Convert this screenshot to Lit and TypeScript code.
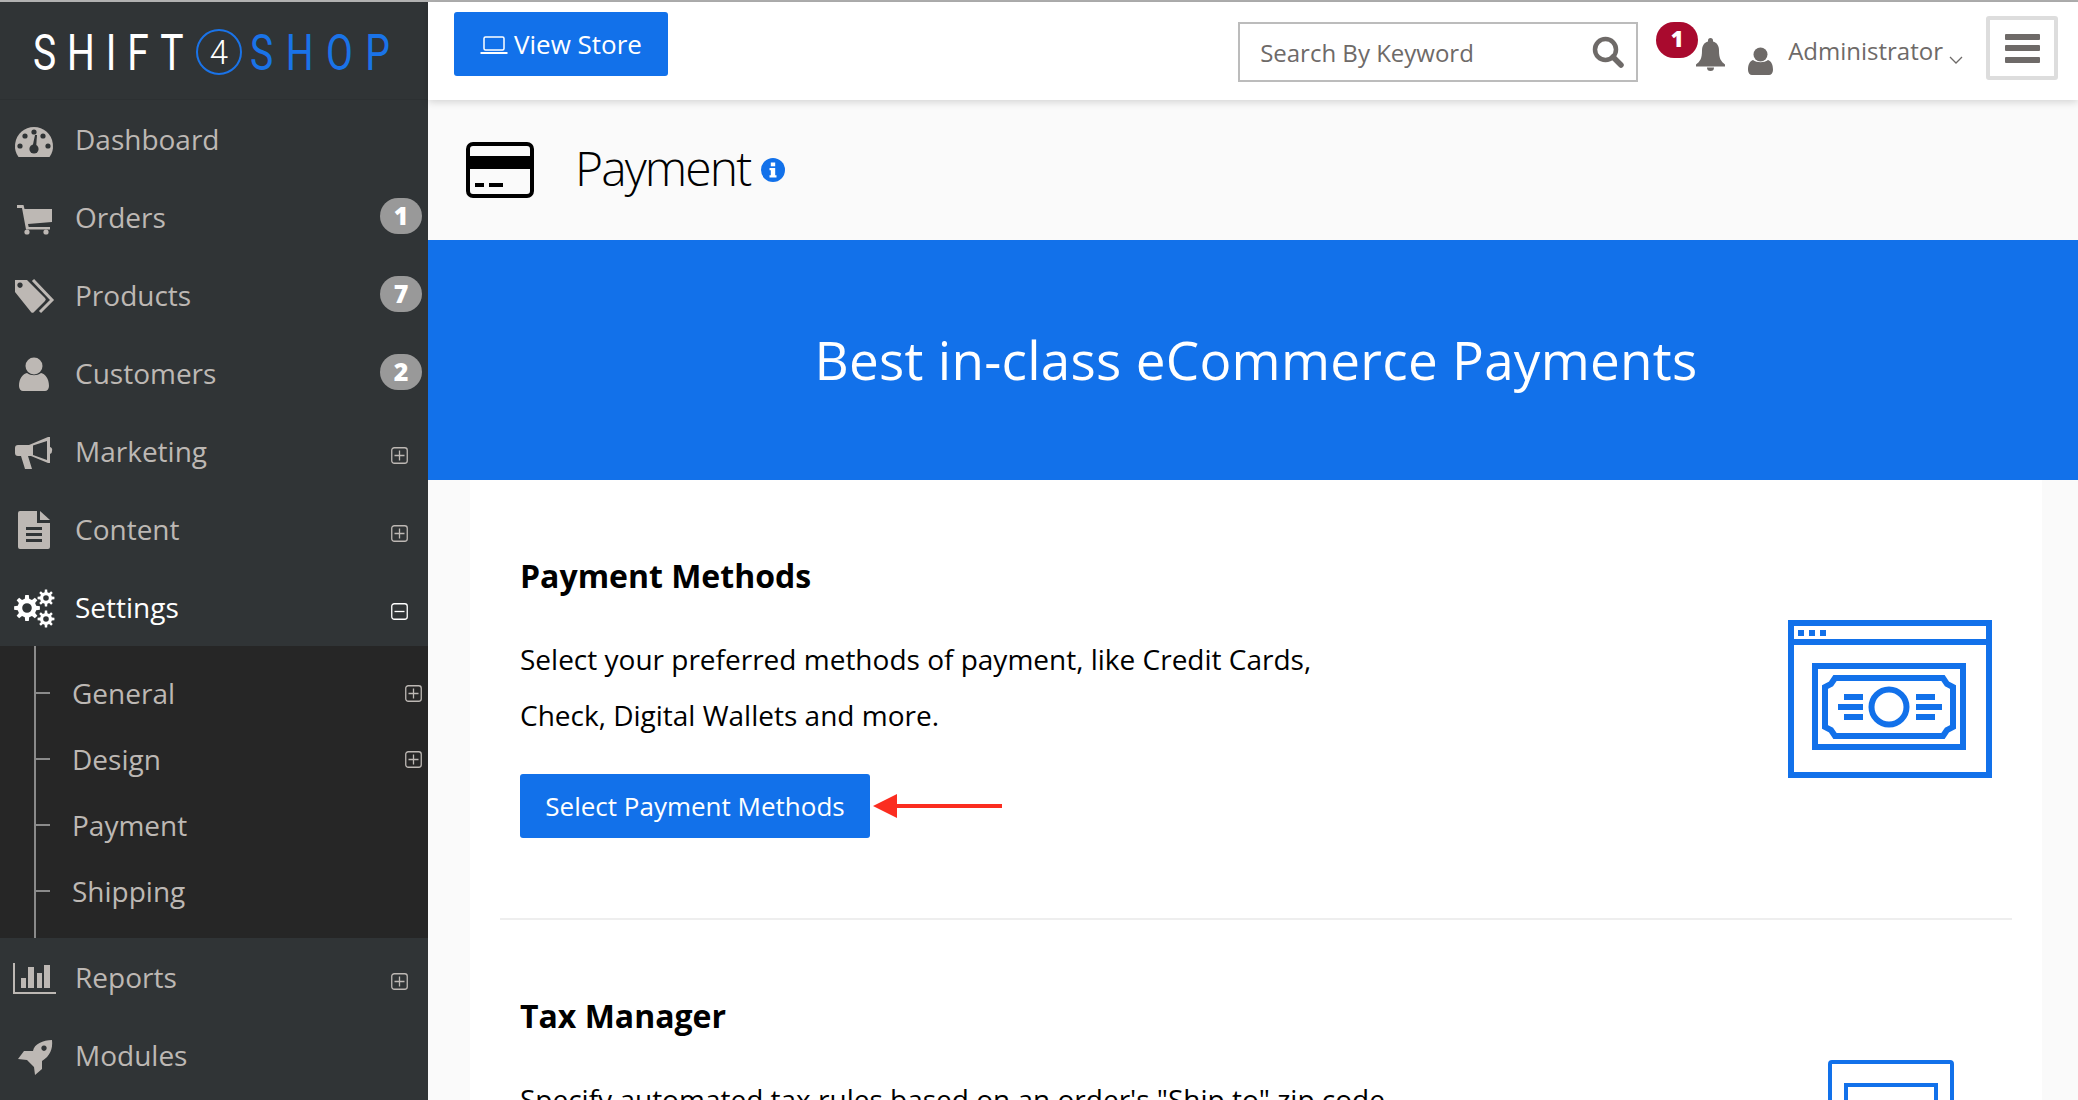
import { LitElement, html, css, svg } from "lit";
import { customElement } from "lit/decorators.js";

const BG = "#303436";

function gear(cx: number, cy: number, rOuter: number, rInner: number, rHole: number, teeth = 8) {
  const pts: string[] = [];
  const step = (Math.PI * 2) / teeth;
  for (let i = 0; i < teeth; i++) {
    const a = i * step;
    const w = step * 0.22;
    const p = [
      [rInner, a - w * 1.35],
      [rOuter, a - w * 0.8],
      [rOuter, a + w * 0.8],
      [rInner, a + w * 1.35],
    ];
    for (const [r, t] of p) {
      pts.push(`${(cx + r * Math.cos(t)).toFixed(2)} ${(cy + r * Math.sin(t)).toFixed(2)}`);
    }
  }
  const hole = `M${cx - rHole} ${cy}a${rHole} ${rHole} 0 1 0 ${rHole * 2} 0a${rHole} ${rHole} 0 1 0 ${-rHole * 2} 0z`;
  return `M${pts.join("L")}z${hole}`;
}

const icons: Record<string, unknown> = {
  dashboard: svg`<path d="M4.5 38A19 19 0 1 1 35.5 38Z"/>
    <g fill="${BG}"><circle cx="6" cy="27" r="2.6"/><circle cx="11" cy="17" r="2.6"/><circle cx="20" cy="13" r="2.6"/><circle cx="29" cy="17" r="2.6"/><circle cx="34" cy="27" r="2.6"/><circle cx="20" cy="30" r="4.6"/><path d="M18 30l3-14h2l-1 14z"/></g>`,
  cart: svg`<path d="M3 8h6.5l1 4H38v13l-24 2 .7 3H36v2.5H12L8 11H3z"/><circle cx="13" cy="35" r="2.6"/><circle cx="32" cy="35" r="2.6"/>`,
  tags: svg`<path fill-rule="evenodd" d="M1 5h12l18 18a2 2 0 0 1 0 3L20 37a2 2 0 0 1-3 0L1 17zM6 7.500a2.700 2.700 0 1 0 .01 0z"/><path d="M19 5l19 20-12 12" fill="none" stroke="currentColor" stroke-width="3"/>`,
  user: svg`<circle cx="20" cy="13" r="8.500"/><path d="M5 33c0-8 4-12 8-13 4 3 10 3 14 0 4 1 8 5 8 13 0 3-2 5-4 5H9c-2 0-4-2-4-5z"/>`,
  bullhorn: svg`<path fill-rule="evenodd" d="M1 17a3 3 0 0 1 3-3h11L34 6h2v10a3 3 0 0 1 2 4 3 3 0 0 1-2 3v9h-2L17 25h-3l4 13h-7L7 25H4a3 3 0 0 1-3-3zM19 14.500V24l14 5V10z"/>`,
  file: svg`<path fill-rule="evenodd" d="M6 2h17v12h13v24a2 2 0 0 1-2 2H6a2 2 0 0 1-2-2V4a2 2 0 0 1 2-2zM12 18v3h16v-3zM12 24v3h16v-3zM12 30v3h16v-3z"/><path d="M26 2l10 9H26z"/>`,
  cogs: svg`<path fill-rule="evenodd" d="${gear(13, 21, 13, 9.5, 4.8)}"/><path fill-rule="evenodd" d="${gear(32, 11, 8.5, 6, 2.8)}"/><path fill-rule="evenodd" d="${gear(32, 32, 8.5, 6, 2.8)}"/>`,
  chart: svg`<path d="M0 6v30h42" fill="none" stroke="currentColor" stroke-width="2"/><path d="M7 21h5v10H7zM14 10h6v21h-6zM23 16h5v15h-5zM30 8h6v23h-6z"/>`,
  rocket: svg`<path fill-rule="evenodd" d="M38 5c1 9-2 16-10 21v8l-7 6-1-8-7-7-9-1 6-8h9C20 9 29 5 38 5zM30 10.500a2.700 2.700 0 1 0 .01 0z"/>`,
};

const plus = html`<svg class="box" viewBox="0 0 17 17"><rect x=".75" y=".75" width="15.5" height="15.5" rx="2.5" fill="none" stroke="currentColor" stroke-width="1.300"/><path d="M3.500 8.500h10M8.500 3.500v10" stroke="currentColor" stroke-width="1.300"/></svg>`;
const minus = html`<svg class="box" viewBox="0 0 17 17"><rect x=".75" y=".75" width="15.5" height="15.5" rx="2.5" fill="none" stroke="currentColor" stroke-width="1.300"/><path d="M3.500 8.500h10" stroke="currentColor" stroke-width="1.300"/></svg>`;

type Item = { label: string; icon: string; badge?: string; toggle?: "plus" | "minus"; active?: boolean };
const top: Item[] = [
  { label: "Dashboard", icon: "dashboard" },
  { label: "Orders", icon: "cart", badge: "1" },
  { label: "Products", icon: "tags", badge: "7" },
  { label: "Customers", icon: "user", badge: "2" },
  { label: "Marketing", icon: "bullhorn", toggle: "plus" },
  { label: "Content", icon: "file", toggle: "plus" },
  { label: "Settings", icon: "cogs", toggle: "minus", active: true },
];
const bottom: Item[] = [
  { label: "Reports", icon: "chart", toggle: "plus" },
  { label: "Modules", icon: "rocket" },
];
const subs = [
  { label: "General", more: true },
  { label: "Design", more: true },
  { label: "Payment", more: false },
  { label: "Shipping", more: false },
];

@customElement("app-root")
export class AppRoot extends LitElement {
  static styles = css`
    :host {
      display: block;
      height: 1100px;
      overflow: hidden;
      font-family: "Open Sans", "Noto Sans", sans-serif;
      background: #fafafa;
      color: #000;
    }
    .shell {
      display: grid;
      grid-template-columns: 428px 1fr;
      height: 1098px;
      border-top: 2px solid #b1b1b1;
    }
    .side {
      background: #303436;
      color: #bdb8b4;
      font-size: 28px;
      overflow: hidden;
    }
    .logo {
      height: 98px;
      box-sizing: border-box;
      padding-top: 5px;
      border-bottom: 1px solid #2c3032;
      display: flex;
      align-items: center;
      padding-left: 33px;
      font-family: "Roboto", sans-serif;
      font-weight: 400;
      font-size: 50px;
      line-height: 1;
      color: #fff;
    }
    .logo-word {
      display: inline-block;
      width: 153px;
      transform-origin: left center;
      transform: scaleX(0.78);
      letter-spacing: 14px;
      white-space: nowrap;
    }
    .logo-word.blue {
      color: #1a73e8;
      width: 138px;
      margin-left: 8px;
      letter-spacing: 16px;
    }
    .logo-four {
      flex: none;
      width: 46px;
      height: 46px;
      box-sizing: border-box;
      border: 2.5px solid #1a73e8;
      border-radius: 50%;
      margin-left: 10px;
      margin-top: -2px;
      display: flex;
      align-items: center;
      justify-content: center;
      font-size: 33px;
      font-weight: 300;
      letter-spacing: 0;
    }
    .item {
      height: 78px;
      display: flex;
      align-items: center;
      padding-left: 14px;
      position: relative;
    }
    .item.active { color: #fff; }
    .ic {
      flex: none;
      width: 40px;
      height: 40px;
      margin-right: 21px;
      fill: currentColor;
      overflow: visible;
    }
    .label { flex: 1; line-height: 40px; }
    .badge {
      flex: none;
      width: 42px;
      height: 36px;
      margin-right: 6px;
      margin-bottom: 3px;
      border-radius: 18px;
      background: #999;
      color: #fff;
      font-size: 25px;
      font-weight: 800;
      line-height: 34px;
      text-align: center;
    }
    .box {
      flex: none;
      width: 17px;
      height: 17px;
      margin-right: 20px;
      margin-top: 8px;
    }
    .subs {
      background: #262626;
      padding: 14px 0;
      position: relative;
    }
    .subs::before {
      content: "";
      position: absolute;
      left: 34px;
      top: 0;
      bottom: 0;
      width: 2px;
      background: #8a8a8a;
    }
    .sub {
      height: 66px;
      display: flex;
      align-items: center;
      padding-left: 36px;
    }
    .tick {
      flex: none;
      width: 14px;
      height: 2px;
      background: #8a8a8a;
      margin-right: 22px;
    }
    .sub .label { line-height: 40px; padding: 0; }
    .sub .box { margin-right: 6px; margin-top: 0; }

    .main { min-width: 0; display: flex; flex-direction: column; }
    .head {
      height: 98px;
      flex: none;
      box-sizing: border-box;
      background: #fff;
      box-shadow: 0 2px 8px rgba(0, 0, 0, 0.16);
      position: relative;
      z-index: 1;
      display: flex;
      align-items: flex-start;
      color: #6e6a68;
    }
    .view {
      margin: 10px 0 0 26px;
      width: 214px;
      height: 64px;
      border-radius: 3px;
      background: #1271ea;
      color: #fff;
      display: flex;
      align-items: center;
      justify-content: center;
      gap: 6px;
      font-size: 26px;
    }
    .view svg { width: 28px; height: 19px; margin-top: 2px; }
    .search {
      margin: 20px 0 0 auto;
      width: 400px;
      height: 60px;
      box-sizing: border-box;
      border: 2px solid #bcbcbc;
      display: flex;
      align-items: center;
      justify-content: space-between;
      padding: 0 12px 0 20px;
      font-size: 24px;
      color: #6e6a68;
    }
    .search svg { width: 32px; height: 32px; }
    .alert {
      margin: 20px 0 0 18px;
      width: 42px;
      height: 36px;
      border-radius: 18px;
      background: #a90a2e;
      color: #fff;
      font-size: 22px;
      font-weight: 800;
      line-height: 33px;
      text-align: center;
      position: relative;
      z-index: 1;
    }
    .bell { width: 33px; height: 34px; margin: 35px 0 0 -4px; fill: #6e6a68; }
    .who { width: 25px; height: 28px; margin: 45px 0 0 21px; fill: #6e6a68; }
    .admin { margin: 29px 0 0 15px; font-size: 24px; line-height: 40px; }
    .chev { width: 14px; height: 8px; margin: 54px 0 0 6px; }
    .burger {
      margin: 14px 20px 0 23px;
      width: 72px;
      height: 64px;
      box-sizing: border-box;
      border: 4px solid #ddd;
      border-radius: 3px;
      display: flex;
      flex-direction: column;
      align-items: center;
      justify-content: center;
      gap: 5.500px;
    }
    .burger i { display: block; width: 35px; height: 6px; border-radius: 1px; background: #6e6a68; }

    .title {
      height: 140px;
      flex: none;
      display: flex;
      align-items: center;
      padding-left: 38px;
    }
    .title .cc { width: 68px; height: 56px; margin-right: 41px; margin-bottom: 1px; }
    .title h1 {
      margin: 0 0 5px;
      font-size: 48px;
      font-weight: 300;
      letter-spacing: -1.900px;
      line-height: 60px;
    }
    .title .info { width: 24px; height: 24px; margin: 0 0 1px 11px; }
    .banner {
      flex: none;
      height: 240px;
      box-sizing: border-box;
      padding: 0 0 2px 6px;
      background: #1271ea;
      color: #fff;
      display: flex;
      align-items: center;
      justify-content: center;
      font-size: 53px;
      letter-spacing: 0.280px;
    }
    .card {
      flex: 1;
      margin: 0 36px 0 42px;
      background: #fff;
      padding: 0 30px;
      overflow: hidden;
    }
    .sec { display: flex; padding: 0 20px; }
    .sec.first { height: 438px; border-bottom: 2px solid #eee; }
    .copy { flex: 1; min-width: 0; }
    .sec h2 {
      margin: 73px 0 0;
      font-size: 32px;
      font-weight: 700;
      line-height: 46px;
    }
    .sec p {
      margin: 32px 0 0;
      font-size: 28px;
      line-height: 56px;
    }
    .cta { display: flex; align-items: center; margin-top: 31px; }
    .btn {
      width: 350px;
      height: 64px;
      border-radius: 3px;
      background: #1271ea;
      color: #fff;
      display: flex;
      align-items: center;
      justify-content: center;
      font-size: 26px;
    }
    .arrow { width: 129px; height: 26px; margin-left: 3px; }
    .sec .pic { flex: none; }
    .pic.money { width: 204px; height: 158px; margin-top: 140px; }
    .pic.tax { width: 126px; height: 140px; margin: 140px 38px 0 0; }
  `;

  private item(i: Item) {
    return html`<div class="item ${i.active ? "active" : ""}">
      <svg class="ic" viewBox="0 0 40 40">${icons[i.icon]}</svg>
      <span class="label">${i.label}</span>
      ${i.badge ? html`<span class="badge">${i.badge}</span>` : ""}
      ${i.toggle === "plus" ? plus : i.toggle === "minus" ? minus : ""}
    </div>`;
  }

  render() {
    return html`<div class="shell">
      <aside class="side">
        <div class="logo">
          <span class="logo-word">SHIFT</span>
          <span class="logo-four">4</span>
          <span class="logo-word blue">SHOP</span>
        </div>
        ${top.map((i) => this.item(i))}
        <div class="subs">
          ${subs.map(
            (s) => html`<div class="sub">
              <span class="tick"></span>
              <span class="label">${s.label}</span>
              ${s.more ? plus : ""}
            </div>`
          )}
        </div>
        ${bottom.map((i) => this.item(i))}
      </aside>
      <div class="main">
        <header class="head">
          <div class="view">
            <svg viewBox="0 0 28 19" fill="none" stroke="#fff" stroke-width="1.500"><rect x="4" y="1" width="20" height="13" rx="1.500"/><path d="M.5 17h27" stroke-width="2"/></svg>
            View Store
          </div>
          <div class="search">
            <span>Search By Keyword</span>
            <svg viewBox="0 0 32 32" fill="none" stroke="#6e6a68"><circle cx="13.500" cy="13.500" r="10.500" stroke-width="4.500"/><path d="M21 21l8 8" stroke-width="5.500" stroke-linecap="round"/></svg>
          </div>
          <span class="alert">1</span>
          <svg class="bell" viewBox="0 0 33 34"><path d="M16.500 1a2.500 2.500 0 0 1 2.500 2.500v1c4 1 6 4.500 6 9 0 8 2 11 6 14v2H2v-2c4-3 6-6 6-14 0-4.500 2-8 6-9v-1A2.500 2.500 0 0 1 16.500 1z"/><path d="M13 30.500h7a3.500 3.500 0 0 1-7 0z"/></svg>
          <svg class="who" viewBox="0 0 25 28"><circle cx="12.500" cy="7.500" r="7"/><path d="M0 23c0-6 2-9 5-10 4 3 11 3 15 0 3 1 5 4 5 10 0 3-2 5-4 5H4c-2 0-4-2-4-5z"/></svg>
          <span class="admin">Administrator</span>
          <svg class="chev" viewBox="0 0 14 8" fill="none" stroke="#6e6a68" stroke-width="1.300"><path d="M1 1l6 6 6-6"/></svg>
          <div class="burger"><i></i><i></i><i></i></div>
        </header>
        <div class="title">
          <svg class="cc" viewBox="0 0 68 56"><rect x="2" y="2" width="64" height="52" rx="5" fill="none" stroke="#000" stroke-width="4"/><rect x="2" y="14" width="64" height="13"/><rect x="9" y="41" width="9" height="4"/><rect x="23" y="41" width="14" height="4"/></svg>
          <h1>Payment</h1>
          <svg class="info" viewBox="0 0 24 24"><circle cx="12" cy="12" r="12" fill="#1271ea"/><rect x="9.800" y="4.500" width="4.400" height="3.800" fill="#fff"/><path d="M8.500 10h5.700v7.200h1.300v2.300h-7v-2.300h1.300v-4.900H8.500z" fill="#fff"/></svg>
        </div>
        <div class="banner">Best in-class eCommerce Payments</div>
        <div class="card">
          <section class="sec first">
            <div class="copy">
              <h2>Payment Methods</h2>
              <p>Select your preferred methods of payment, like Credit Cards,<br />Check, Digital Wallets and more.</p>
              <div class="cta">
                <div class="btn">Select Payment Methods</div>
                <svg class="arrow" viewBox="0 0 129 26"><path d="M0 13L24 1v10h105v4H24v10z" fill="#fb2d20"/></svg>
              </div>
            </div>
            <svg class="pic money" viewBox="0 0 204 158" fill="none" stroke="#1271ea" stroke-width="6">
              <rect x="3" y="3" width="198" height="152"/>
              <path d="M3 22h198"/>
              <g fill="#1271ea" stroke="none"><rect x="10" y="10" width="6" height="6"/><rect x="21" y="10" width="6" height="6"/><rect x="32" y="10" width="6" height="6"/></g>
              <rect x="27" y="46" width="148" height="81"/>
              <path d="M47 58h108l4 6 6 3v40l-6 3-4 6H47l-4-6-6-3V67l6-3z"/>
              <circle cx="101" cy="87" r="17.500"/>
              <path d="M56 77h19M50 87h25M56 97h19M128 77h19M128 87h26M128 97h19"/>
            </svg>
          </section>
          <section class="sec">
            <div class="copy">
              <h2>Tax Manager</h2>
              <p>Specify automated tax rules based on an order's "Ship to" zip code.</p>
            </div>
            <svg class="pic tax" viewBox="0 0 126 140" fill="none" stroke="#1271ea" stroke-width="4">
              <rect x="2" y="2" width="122" height="136" rx="2"/>
              <rect x="18" y="25" width="90" height="90"/>
            </svg>
          </section>
        </div>
      </div>
    </div>`;
  }
}
